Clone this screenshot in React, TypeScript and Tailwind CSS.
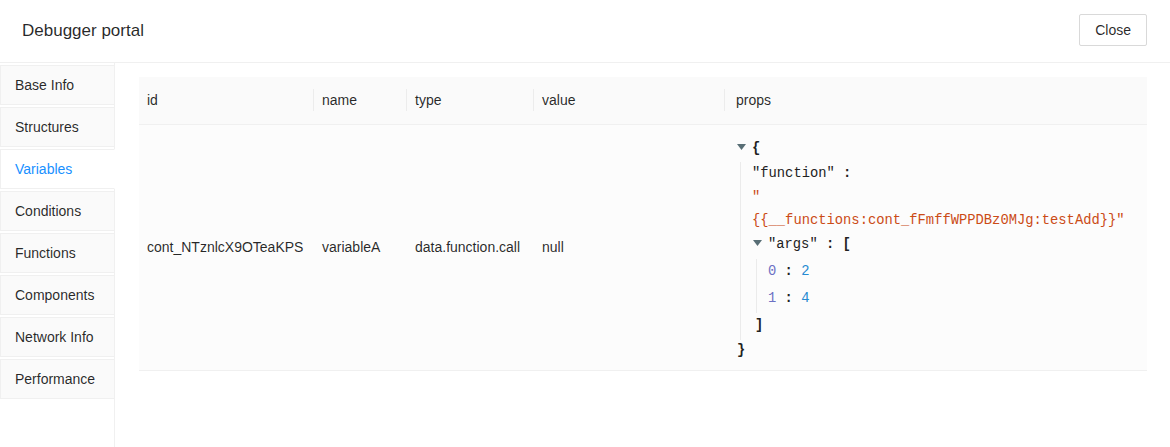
const tabs = [
  'Base Info',
  'Structures',
  'Variables',
  'Conditions',
  'Functions',
  'Components',
  'Network Info',
  'Performance',
];

const Caret = ({ className = '' }: { className?: string }) => (
  <svg width="9" height="6" viewBox="0 0 9 6" className={className}>
    <path d="M0 0 L9 0 L4.5 6 Z" fill="#586e75" />
  </svg>
);

const JsonView = () => (
  <div className="ml-[4px] font-['Liberation_Mono',monospace] text-[13.8px] text-[#222]">
    <div className="flex h-[24px] items-center">
      <Caret className="mr-[6px] -mt-[6px]" />
      <span className="font-bold">{'{'}</span>
    </div>
    <div className="ml-[3px] border-l border-[#ebebeb] pl-[11px]">
      <div className="flex h-[25px] items-center whitespace-pre">
        <span>"function"</span>
        <span className="font-bold"> : </span>
      </div>
      <div className="flex h-[23px] items-center text-[#cb4b16]">"</div>
      <div className="flex h-[23px] items-center whitespace-pre text-[#cb4b16]">
        {'{{__functions:cont_fFmffWPPDBz0MJg:testAdd}}"'}
      </div>
      <div className="flex h-[26px] items-center whitespace-pre">
        <Caret className="ml-[1px] mr-[6px] -mt-[6px]" />
        <span>"args"</span>
        <span className="font-bold"> : [</span>
      </div>
      <div className="ml-[4px] border-l border-[#ebebeb] pl-[11px]">
        {[2, 4].map((v, i) => (
          <div key={i} className="flex h-[27px] items-center whitespace-pre">
            <span className="text-[#6c71c4]">{i}</span>
            <span className="font-bold"> : </span>
            <span className="text-[#268bd2]">{v}</span>
          </div>
        ))}
      </div>
      <div className="ml-[3px] flex h-[27px] items-center font-bold">]</div>
    </div>
    <div className="flex h-[24px] items-center font-bold">{'}'}</div>
  </div>
);

const Sep = ({ left = '-left-[9px]' }: { left?: string }) => (
  <span className={`absolute ${left} top-1/2 h-[22px] w-px -translate-y-1/2 bg-[#ececec]`} />
);

const App = () => {
  return (
    <div className="flex h-[447px] w-[1170px] flex-col overflow-hidden bg-white font-['Liberation_Sans',Arial,sans-serif] text-[14px] text-[rgba(0,0,0,0.85)]">
      <header className="flex h-[63px] shrink-0 items-center justify-between border-b border-[#f0f0f0] pl-[22px] pr-[23px]">
        <h1 className="text-[17px] font-medium text-[rgba(0,0,0,0.85)]">Debugger portal</h1>
        <button className="mt-[-2px] h-[32px] rounded-[2px] border border-[#d9d9d9] bg-white px-[15px] text-[14px] text-[rgba(0,0,0,0.85)]">
          Close
        </button>
      </header>

      <div className="flex flex-1">
        <nav className="flex w-[115px] shrink-0 flex-col gap-[2px] border-r border-[#f0f0f0] pt-[2px]">
          {tabs.map((t) => {
            const active = t === 'Variables';
            return (
              <div
                key={t}
                className={
                  active
                    ? '-mr-px flex h-[40px] items-center border border-r-white border-[#f0f0f0] bg-white pl-[14px] text-[#1890ff]'
                    : '-mr-px flex h-[40px] items-center border border-[#f0f0f0] bg-[#fafafa] pl-[14px]'
                }
              >
                {t}
              </div>
            );
          })}
        </nav>

        <main className="flex-1 pl-[24px] pr-[23px] pt-[14px]">
          <table className="w-full border-collapse text-left">
            <thead>
              <tr className="h-[47px] border-b border-[#f0f0f0] bg-[#fafafa]">
                <th className="w-[175px] px-[8px] font-medium">id</th>
                <th className="w-[93px] px-[8px] font-medium">
                  <div className="relative">
                    <Sep />
                    name
                  </div>
                </th>
                <th className="w-[127px] px-[8px] font-medium">
                  <div className="relative">
                    <Sep />
                    type
                  </div>
                </th>
                <th className="w-[191px] px-[8px] font-medium">
                  <div className="relative">
                    <Sep />
                    value
                  </div>
                </th>
                <th className="px-[8px] pl-[11px] font-medium">
                  <div className="relative">
                    <Sep left="-left-[12px]" />
                    props
                  </div>
                </th>
              </tr>
            </thead>
            <tbody>
              <tr className="border-b border-[#f0f0f0] bg-[#fcfcfc]">
                <td className="px-[8px]">cont_NTznlcX9OTeaKPS</td>
                <td className="px-[8px]">variableA</td>
                <td className="px-[8px]">data.function.call</td>
                <td className="px-[8px]">null</td>
                <td className="px-[8px] pb-[6px] pt-[13px]">
                  <JsonView />
                </td>
              </tr>
            </tbody>
          </table>
        </main>
      </div>
    </div>
  );
};

export default App;
